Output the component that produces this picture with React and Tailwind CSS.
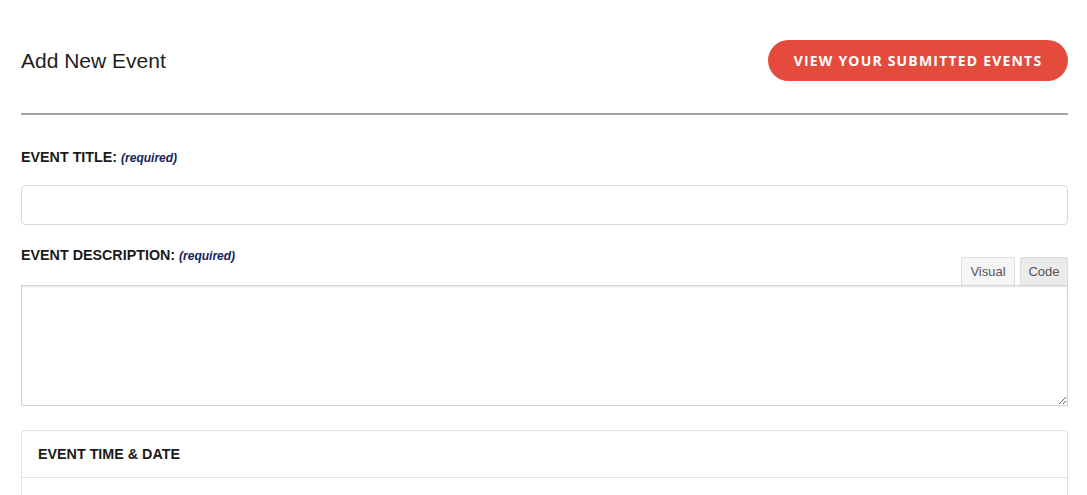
import React from 'react'

export default function App() {
  return (
    <div className="min-h-screen w-full bg-white px-[21px] pr-[19px] pt-[40px] font-['Liberation_Sans',Arial,sans-serif] text-[#1a1a1a]">
      {/* Header */}
      <div className="flex items-center justify-between h-[41px]">
        <h1 className="text-[21px] font-normal text-[#1d1d1d]">Add New Event</h1>
        <button
          type="button"
          className="h-[41px] w-[300px] rounded-full bg-[#e54b3d] text-white font-['Open_Sans',sans-serif] font-bold text-[14px] tracking-[0.085em]"
        >
          VIEW YOUR SUBMITTED EVENTS
        </button>
      </div>

      <div className="mt-[32px] h-[2px] bg-[#a3a3a3]" />

      {/* Event title */}
      <div className="mt-[32px] text-[14.3px] font-bold text-[#1a1a1a]">
        EVENT TITLE: <em className="text-[12px] text-[#15235a]">(required)</em>
      </div>
      <input
        type="text"
        className="mt-[17px] block w-full h-[40px] rounded-[4px] border border-[#d9d9d9] bg-white px-3 outline-none"
      />

      {/* Event description */}
      <div className="mt-[20px] flex items-start justify-between">
        <div className="text-[14.3px] font-bold text-[#1a1a1a]">
          EVENT DESCRIPTION: <em className="text-[12px] text-[#15235a]">(required)</em>
        </div>
        <div className="mt-[12px] flex gap-[5px]">
          <button
            type="button"
            className="h-[28px] w-[54px] rounded-t-[3px] border border-b-0 border-[#dcdcdc] bg-[#f6f6f6] text-[13px] text-[#555]"
          >
            Visual
          </button>
          <button
            type="button"
            className="h-[28px] w-[48px] rounded-t-[3px] border border-b-0 border-[#dcdcdc] bg-[#ebebeb] text-[13px] text-[#555]"
          >
            Code
          </button>
        </div>
      </div>
      <textarea className="block w-full h-[121px] border border-[#d4d4d4] shadow-[inset_0_1px_2px_rgba(0,0,0,0.12)] bg-white outline-none resize-y" />

      {/* Time & date card */}
      <div className="mt-[24px] rounded-t-[4px] border border-b-0 border-[#e1e1e1]">
        <div className="h-[47px] flex items-center px-[16px] border-b border-[#e1e1e1] text-[14.3px] font-bold text-[#1a1a1a]">
          EVENT TIME &amp; DATE
        </div>
        <div className="h-[40px]" />
      </div>
    </div>
  )
}
